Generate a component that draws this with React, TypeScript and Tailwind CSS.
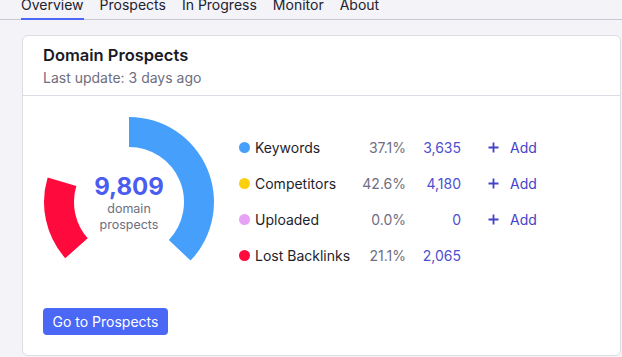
import React from "react";

const CX = 86;
const CY = 86;
const RO = 85;
const RI = 55;

function pt(deg: number, r: number) {
  const a = (deg * Math.PI) / 180;
  return [CX + r * Math.sin(a), CY - r * Math.cos(a)];
}

function arc(a0: number, a1: number) {
  const [x0, y0] = pt(a0, RO);
  const [x1, y1] = pt(a1, RO);
  const [x2, y2] = pt(a1, RI);
  const [x3, y3] = pt(a0, RI);
  const large = a1 - a0 > 180 ? 1 : 0;
  return `M${x0} ${y0} A${RO} ${RO} 0 ${large} 1 ${x1} ${y1} L${x2} ${y2} A${RI} ${RI} 0 ${large} 0 ${x3} ${y3} Z`;
}

const rows = [
  { color: "bg-[#479ffc]", label: "Keywords", pct: "37.1%", count: "3,635", add: true },
  { color: "bg-[#fcd00f]", label: "Competitors", pct: "42.6%", count: "4,180", add: true },
  { color: "bg-[#e6a2f5]", label: "Uploaded", pct: "0.0%", count: "0", add: true },
  { color: "bg-[#ff0a3c]", label: "Lost Backlinks", pct: "21.1%", count: "2,065", add: false },
];

export default function App() {
  return (
    <div
      className="w-[622px] h-[357px] overflow-hidden bg-[#f3f3f8] text-[#1e1e2c]"
      style={{ fontFamily: "Inter, 'Noto Sans', sans-serif" }}
    >
      <nav className="-mt-[5px] flex gap-4 pl-[21px] border-b border-[#c8c8d0] text-[14px] leading-[20px] text-[#22222e]">
        <div className="pb-[3px] -mb-px border-b-2 border-[#4a67f6]">Overview</div>
        <div className="pb-[3px]">Prospects</div>
        <div className="pb-[3px]">In Progress</div>
        <div className="pb-[3px]">Monitor</div>
        <div className="pb-[3px]">About</div>
      </nav>

      <div className="ml-[22px] mt-[15px] w-[599px] bg-white border border-[#dcdce4] rounded-[6px]">
        <div className="px-[20px] pt-[8px] pb-[7px] border-b border-[#dcdce4]">
          <div className="text-[16.5px] leading-[22px] font-semibold text-[#1a1a26]">Domain Prospects</div>
          <div className="text-[14px] leading-[20px] text-[#6e6e80] mt-[2px]">Last update: 3 days ago</div>
        </div>

        <div className="px-[20px] pt-[20px] pb-[20px]">
          <div className="flex items-center">
            <div className="relative w-[172px] h-[172px] shrink-0">
              <svg width="172" height="172" viewBox="0 0 172 172">
                <path d={arc(0, 133.6)} fill="#479ffc" />
                <path d={arc(228.6, 286.8)} fill="#ff0a3c" />
              </svg>
              <div className="absolute inset-0 flex flex-col items-center justify-center pt-[1px]">
                <div className="text-[24px] leading-[28px] font-bold text-[#4a5df0]">9,809</div>
                <div className="text-[12.5px] leading-[16px] text-[#6e6e80] text-center">
                  domain
                  <br />
                  prospects
                </div>
              </div>
            </div>

            <div className="ml-[24px] -mt-[2px] flex flex-col text-[14px]">
              {rows.map((r) => (
                <div key={r.label} className="flex items-center h-[36px]">
                  <div className="w-[121px] flex items-center">
                    <span className={`w-[11px] h-[11px] rounded-full ${r.color}`} />
                    <span className="ml-[5px] text-[#1e1e2c]">{r.label}</span>
                  </div>
                  <div className="w-[46px] text-right text-[#6e6e80]">{r.pct}</div>
                  <div className="w-[55px] text-right text-[#4f4fd2]">{r.count}</div>
                  {r.add && (
                    <div className="ml-[27px] flex items-center text-[#4343c8]">
                      <svg width="11" height="11" viewBox="0 0 11 11">
                        <path d="M5.5 0.5V10.5M0.5 5.5H10.5" stroke="#4343c8" strokeWidth="1.8" />
                      </svg>
                      <span className="ml-[11px]">Add</span>
                    </div>
                  )}
                </div>
              ))}
            </div>
          </div>

          <button className="mt-[20px] h-[27px] px-[9.5px] rounded-[4px] bg-[#4a67f6] text-white text-[14px] leading-[20px]">
            Go to Prospects
          </button>
        </div>
      </div>
    </div>
  );
}
